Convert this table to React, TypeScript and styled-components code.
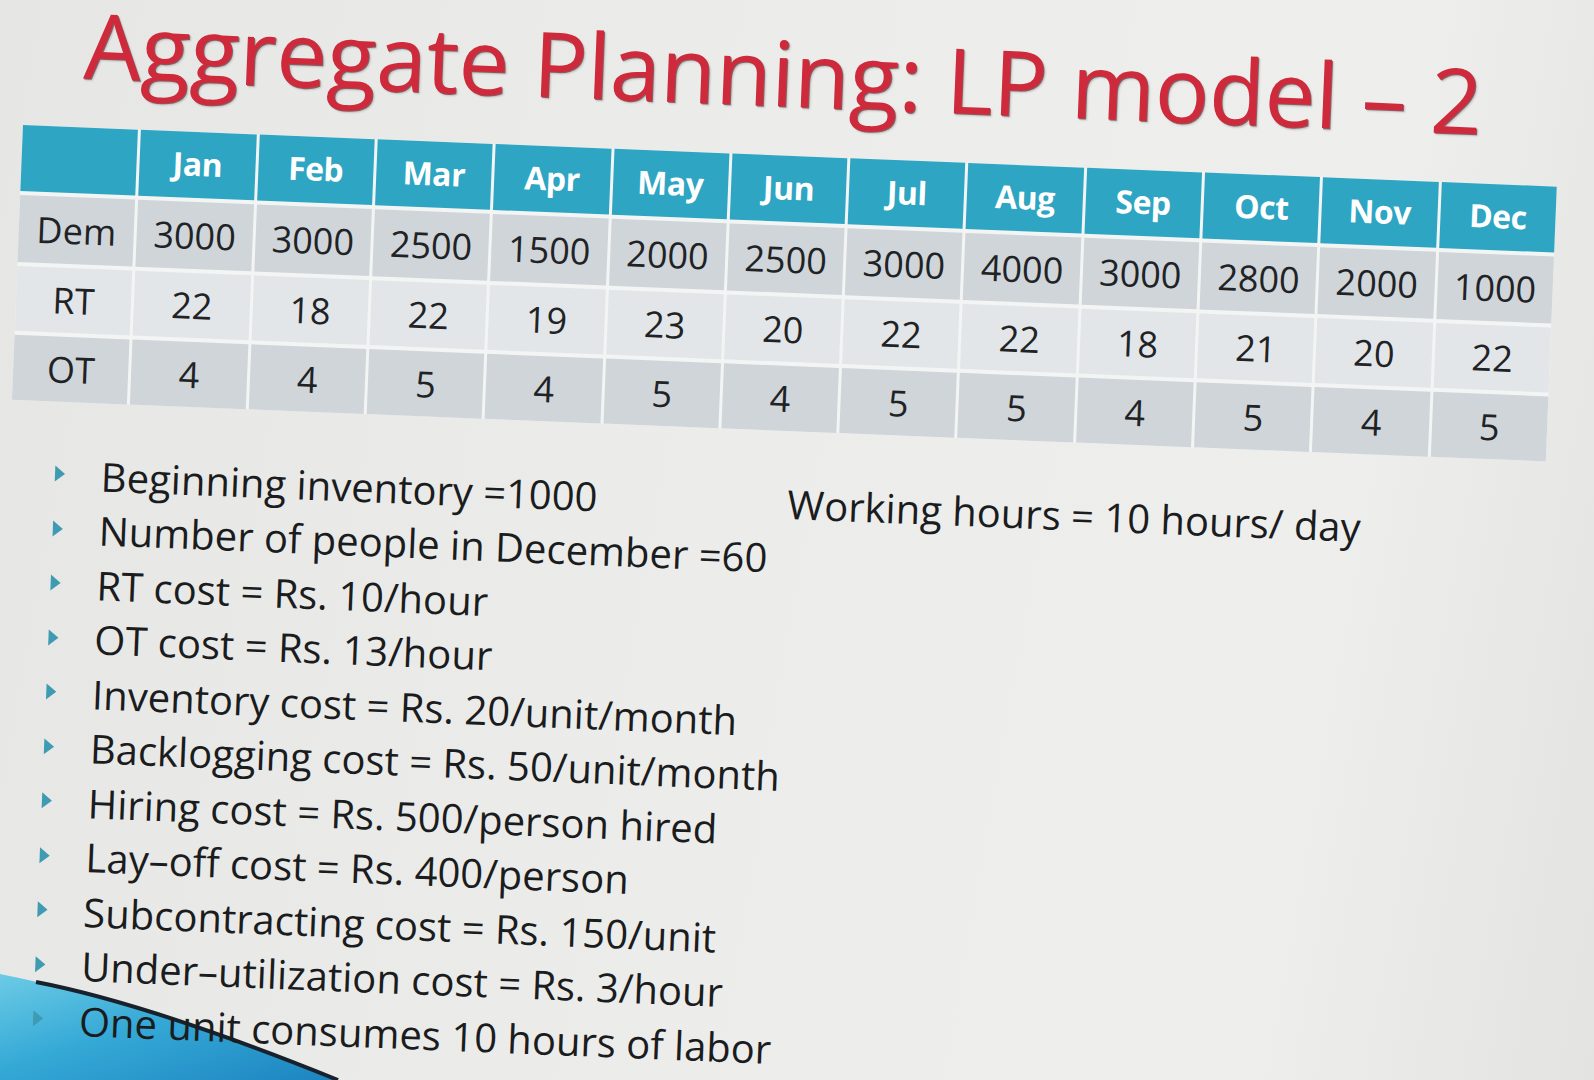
import React from "react";
import styled, { createGlobalStyle } from "styled-components";

const GlobalStyle = createGlobalStyle`
  html, body { margin: 0; padding: 0; }
  body { background: #e9eae8; overflow: hidden; }
  #root { width: 1594px; height: 1080px; }
`;

const Page = styled.div`
  position: relative;
  width: 1594px;
  height: 1080px;
  overflow: hidden;
  background: linear-gradient(100deg, #e6e7e5 0%, #ecedeb 45%, #eeefed 80%, #e3e4e2 100%);
  font-family: "Open Sans", "DejaVu Sans", sans-serif;
`;

const Swoosh = styled.svg`
  position: absolute;
  left: 0;
  bottom: 0;
  width: 420px;
  height: 160px;
  z-index: 0;
`;

const Slide = styled.div`
  position: relative;
  z-index: 1;
  width: 1594px;
  transform: rotate(2.3deg);
  transform-origin: 0 0;
  display: flex;
  flex-direction: column;
`;

const Title = styled.h1`
  margin: 0 0 0 86px;
  font-family: "Open Sans", "DejaVu Sans", sans-serif;
  font-weight: 400;
  font-size: 90.5px;
  line-height: 80px;
  color: #cf2a3b;
  text-shadow: 1px 1px 0 rgba(90, 10, 20, 0.55), 2px 2px 2px rgba(0, 0, 0, 0.18);
  white-space: nowrap;
`;

const Table = styled.div`
  margin: 44px 0 0 28px;
  width: 1535px;
  display: grid;
  grid-template-columns: repeat(13, 1fr);
  grid-template-rows: 66px 67px 65px 65px;
  column-gap: 3px;
  row-gap: 4px;
  background: #f3f5f5;
`;

const Cell = styled.div<{ $tone: "head" | "dark" | "light" }>`
  display: flex;
  align-items: center;
  justify-content: center;
  padding-bottom: ${(p) => (p.$tone === "head" ? "4px" : "0")};
  background: ${(p) => (p.$tone === "head" ? "#2ea5c2" : p.$tone === "dark" ? "#cfd5d9" : "#e3e6e8")};
  color: ${(p) => (p.$tone === "head" ? "#ffffff" : "#1f2326")};
  font-family: "Open Sans", "DejaVu Sans", sans-serif;
  font-weight: ${(p) => (p.$tone === "head" ? 700 : 400)};
  font-size: ${(p) => (p.$tone === "head" ? "32px" : "36px")};
  letter-spacing: ${(p) => (p.$tone === "head" ? "-0.5px" : "0px")};
`;

const Notes = styled.div`
  margin: 45px 0 0 0;
  display: grid;
  grid-template-columns: 807px 1fr;
  align-items: start;
`;

const BulletList = styled.ul`
  list-style: none;
  margin: 0;
  padding: 0 0 0 74px;
  display: flex;
  flex-direction: column;
`;

const Bullet = styled.li`
  display: flex;
  align-items: center;
  height: 54.5px;
  font-size: 40px;
  color: #1b1c1e;
  white-space: nowrap;
`;

const Arrow = styled.span`
  display: inline-block;
  width: 0;
  height: 0;
  border-top: 8px solid transparent;
  border-bottom: 8px solid transparent;
  border-left: 10px solid #3f9bb2;
  margin-right: 36px;
  flex: none;
`;

const Side = styled.div`
  display: flex;
  align-items: center;
  height: 54.5px;
  font-size: 40px;
  color: #1b1c1e;
  white-space: nowrap;
`;

const months = ["Jan", "Feb", "Mar", "Apr", "May", "Jun", "Jul", "Aug", "Sep", "Oct", "Nov", "Dec"];
const rows: { label: string; tone: "dark" | "light"; values: number[] }[] = [
  { label: "Dem", tone: "dark", values: [3000, 3000, 2500, 1500, 2000, 2500, 3000, 4000, 3000, 2800, 2000, 1000] },
  { label: "RT", tone: "light", values: [22, 18, 22, 19, 23, 20, 22, 22, 18, 21, 20, 22] },
  { label: "OT", tone: "dark", values: [4, 4, 5, 4, 5, 4, 5, 5, 4, 5, 4, 5] },
];

const bullets = [
  "Beginning inventory =1000",
  "Number of people in December =60",
  "RT cost = Rs. 10/hour",
  "OT cost = Rs. 13/hour",
  "Inventory cost = Rs. 20/unit/month",
  "Backlogging cost = Rs. 50/unit/month",
  "Hiring cost = Rs. 500/person hired",
  "Lay–off cost = Rs. 400/person",
  "Subcontracting cost = Rs. 150/unit",
  "Under–utilization cost = Rs. 3/hour",
  "One unit consumes 10 hours of labor",
];

export default function App() {
  return (
    <>
      <GlobalStyle />
      <Page>
        <Swoosh viewBox="0 0 420 160" preserveAspectRatio="none">
          <defs>
            <linearGradient id="sw" x1="0" y1="0" x2="1" y2="1">
              <stop offset="0" stopColor="#6ccbe6" />
              <stop offset="0.45" stopColor="#35a9d6" />
              <stop offset="1" stopColor="#1c84c0" />
            </linearGradient>
          </defs>
          <path d="M0 54 Q 150 84 338 160 L 0 160 Z" fill="url(#sw)" />
          <path d="M36 62 Q 150 84 338 160" fill="none" stroke="#17222c" strokeWidth="4" />
        </Swoosh>
        <Slide>
          <Title>Aggregate Planning: LP model – 2</Title>
          <Table>
            <Cell $tone="head" />
            {months.map((m) => (
              <Cell key={m} $tone="head">{m}</Cell>
            ))}
            {rows.map((r) => (
              <React.Fragment key={r.label}>
                <Cell $tone={r.tone}>{r.label}</Cell>
                {r.values.map((v, i) => (
                  <Cell key={i} $tone={r.tone}>{v}</Cell>
                ))}
              </React.Fragment>
            ))}
          </Table>
          <Notes>
            <BulletList>
              {bullets.map((b) => (
                <Bullet key={b}>
                  <Arrow />
                  {b}
                </Bullet>
              ))}
            </BulletList>
            <Side>Working hours = 10 hours/ day</Side>
          </Notes>
        </Slide>
      </Page>
    </>
  );
}
